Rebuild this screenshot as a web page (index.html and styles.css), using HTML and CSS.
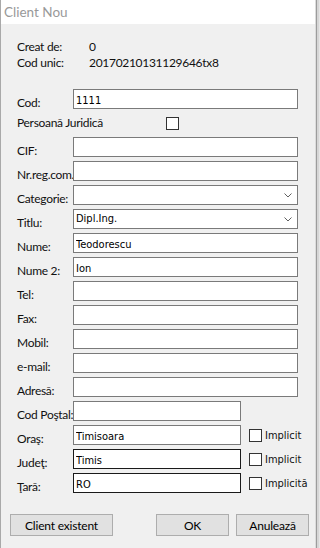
FILE: index.html
```html
<!DOCTYPE html>
<html lang="ro">

<head>
  <meta charset="UTF-8">
  <meta name="viewport" content="width=device-width, initial-scale=1.0">
  <title>Client Nou</title>
  <link rel="stylesheet" href="styles.css">
</head>

<body>
  <div class="window">
    <div class="titlebar">Client Nou</div>
    <div class="content">
      <div class="info">
        <span>Creat de:</span>
        <span>0</span>
        <span>Cod unic:</span>
        <span>20170210131129646tx8</span>
      </div>

      <div class="form">
        <label>Cod:</label>
        <input class="field" type="text" value="1111">

        <div class="row-check">
          <span class="check-label">Persoană Juridică</span>
          <input class="check" type="checkbox">
        </div>

        <label>CIF:</label>
        <input class="field" type="text">

        <label>Nr.reg.com.</label>
        <input class="field" type="text">

        <label>Categorie:</label>
        <div class="field combo">
          <span></span>
          <svg width="8" height="5" viewBox="0 0 8 5"><path d="M0.5 0.5 L4 4 L7.5 0.5" fill="none" stroke="#606060" stroke-width="1"/></svg>
        </div>

        <label>Titlu:</label>
        <div class="field combo">
          <span>Dipl.Ing.</span>
          <svg width="8" height="5" viewBox="0 0 8 5"><path d="M0.5 0.5 L4 4 L7.5 0.5" fill="none" stroke="#606060" stroke-width="1"/></svg>
        </div>

        <label>Nume:</label>
        <input class="field" type="text" value="Teodorescu">

        <label>Nume 2:</label>
        <input class="field" type="text" value="Ion">

        <label>Tel:</label>
        <input class="field" type="text">

        <label>Fax:</label>
        <input class="field" type="text">

        <label>Mobil:</label>
        <input class="field" type="text">

        <label>e-mail:</label>
        <input class="field" type="text">

        <label>Adresă:</label>
        <input class="field" type="text">

        <label>Cod Poştal:</label>
        <div class="short">
          <input class="field" type="text">
        </div>

        <label>Oraş:</label>
        <div class="short">
          <input class="field" type="text" value="Timisoara">
          <input class="check" type="checkbox">
          <span class="implicit">Implicit</span>
        </div>

        <label>Judeţ:</label>
        <div class="short">
          <input class="field dark" type="text" value="Timis">
          <input class="check" type="checkbox">
          <span class="implicit">Implicit</span>
        </div>

        <label>Ţară:</label>
        <div class="short">
          <input class="field dark" type="text" value="RO">
          <input class="check" type="checkbox">
          <span class="implicit">Implicită</span>
        </div>
      </div>

      <div class="buttons">
        <button class="btn btn-wide">Client existent</button>
        <button class="btn btn-ok">OK</button>
        <button class="btn">Anulează</button>
      </div>
    </div>
  </div>
</body>

</html>
```

FILE: styles.css
```css
html,
body {
  margin: 0;
  padding: 0;
  height: 100%;
}

body {
  background-color: #e6e6e6;
  font-family: Lato, "Open Sans", sans-serif;
  font-size: 12px;
  letter-spacing: -0.3px;
  color: #111;
}

.window {
  box-sizing: border-box;
  width: 316px;
  height: 548px;
  border-left: 1px solid #a9a9a9;
  border-right: 1px solid #dcdcdc;
  background-color: #f0f0f0;
  box-shadow: 1px 0 0 #9c9c9c, 3px 0 0 #d6d6d6;
}

.titlebar {
  height: 24px;
  line-height: 24px;
  padding-left: 3px;
  background-color: #fff;
  color: #999;
  font-size: 13.5px;
  letter-spacing: 0;
}

.content {
  padding: 15px 17px 0 16px;
}

.info {
  display: grid;
  grid-template-columns: 72px auto;
  line-height: 16px;
}

.form {
  display: grid;
  grid-template-columns: 56px 225px;
  grid-auto-rows: 20px;
  row-gap: 4px;
  margin-top: 18px;
}

.form label {
  align-self: end;
  line-height: 12px;
  white-space: nowrap;
}

.field {
  box-sizing: border-box;
  width: 100%;
  height: 20px;
  margin: 0;
  padding: 2px 2px 0;
  border: 1px solid #7a7a7a;
  background-color: #fff;
  font-family: "DejaVu Sans Condensed", "DejaVu Sans", sans-serif;
  font-size: 11px;
  line-height: 13px;
  letter-spacing: 0;
  color: #000;
  outline: none;
}

.field.dark {
  border-color: #1a1a1a;
}

.combo {
  display: flex;
  align-items: flex-start;
  justify-content: space-between;
  padding-right: 5px;
}

.combo svg {
  align-self: center;
  margin-top: -2px;
}

.row-check {
  grid-column: 1 / -1;
  display: grid;
  grid-template-columns: 149px auto;
  align-items: center;
  line-height: 16px;
}

.check {
  appearance: none;
  flex: none;
  box-sizing: border-box;
  width: 13px;
  height: 13px;
  margin: 0;
  border: 1px solid #333;
  background-color: #fff;
}

.short {
  display: flex;
  align-items: center;
}

.short .field {
  width: 168px;
  flex: none;
}

.short .check {
  margin-left: 8px;
}

.implicit {
  margin-left: 3px;
  font-family: "DejaVu Sans Condensed", "DejaVu Sans", sans-serif;
  font-size: 11px;
  letter-spacing: 0;
  white-space: nowrap;
}

.buttons {
  display: flex;
  gap: 7px;
  margin: 21px -11px 0 -7px;
}

.btn {
  box-sizing: border-box;
  width: 73px;
  height: 22px;
  padding: 0;
  border: 1px solid #adadad;
  background-color: #e1e1e1;
  font-family: Lato, "Open Sans", sans-serif;
  font-size: 12px;
  letter-spacing: -0.2px;
  color: #000;
}

.btn-wide {
  width: 103px;
}

.btn-ok {
  margin-left: auto;
}
```
